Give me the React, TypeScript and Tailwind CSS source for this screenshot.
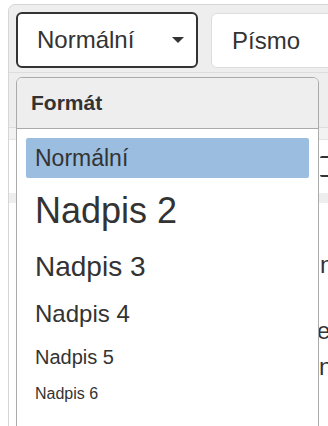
import React from "react";

const headings = [
  { label: "Nadpis 2", size: "text-[36px]", h: "h-[66px]" },
  { label: "Nadpis 3", size: "text-[28px]", h: "h-[46px]" },
  { label: "Nadpis 4", size: "text-[24px]", h: "h-[48px]" },
  { label: "Nadpis 5", size: "text-[20px]", h: "h-[38px]" },
  { label: "Nadpis 6", size: "text-[16px]", h: "h-[36px]" },
];

export default function App() {
  return (
    <div className="relative h-[426px] w-[328px] overflow-hidden bg-white font-['Liberation_Sans',Arial,sans-serif] text-[#333]">
      <div className="ml-2 mt-1 h-[440px] w-[340px] overflow-hidden rounded-tl-[7px] border border-[#d6d6d6] bg-[#eee]">
        {/* toolbar */}
        <div className="flex gap-[13px] border-b border-[#ddd] px-[7px] pb-[4px] pt-[7px]">
          <button className="flex h-[56px] w-[182px] shrink-0 items-center justify-between rounded-[6px] border-2 border-[#333] bg-white pl-[19px] pr-[12px] text-[24px]">
            Normální
            <span className="h-0 w-0 border-x-[6px] border-t-[6px] border-x-transparent border-t-[#333]" />
          </button>
          <button className="mt-px flex h-[55px] w-[140px] shrink-0 items-center rounded-[6px] border border-[#ddd] bg-white pl-[20px] text-[24px]">
            Písmo
          </button>
        </div>

        {/* second toolbar row, mostly hidden by the menu */}
        <div className="h-[55px] border-b border-[#ddd]" />
        <div className="h-[12px] border-b border-[#e4e4e4] bg-[#f2f2f2]" />

        {/* editor content */}
        <div className="h-[400px] bg-white pt-[16px]">
          <div className="ml-[311px] h-[21px] rounded-l-[2px] border-y-2 border-[#333]" />
          <div className="mt-[16px] h-[10px] bg-[#eee]" />
          <div className="whitespace-nowrap text-[24px] leading-[28px]">
            <p className="ml-[311px] mt-[48px]">nadpis</p>
            <p className="ml-[308px] mt-[38px]">e</p>
            <p className="ml-[310px] mt-[8px]">ne</p>
          </div>
        </div>
      </div>

      {/* Format menu */}
      <div className="absolute left-[16px] top-[77px] -bottom-[10px] w-[303px] overflow-hidden rounded-t-[6px] border border-[#aaa] bg-white">
        <div className="flex h-[51px] items-center border-b border-[#aaa] bg-[#eee] pl-[14px] text-[21px] font-bold">
          Formát
        </div>
        <div className="px-[9px] pt-[9px]">
          <div className="flex h-[40px] items-center rounded-[2px] bg-[#9bbee0] pl-[9px] text-[23px]">
            Normální
          </div>
          {headings.map((item) => (
            <div key={item.label} className={`flex items-center pl-[9px] ${item.h} ${item.size}`}>
              {item.label}
            </div>
          ))}
        </div>
      </div>
    </div>
  );
}
